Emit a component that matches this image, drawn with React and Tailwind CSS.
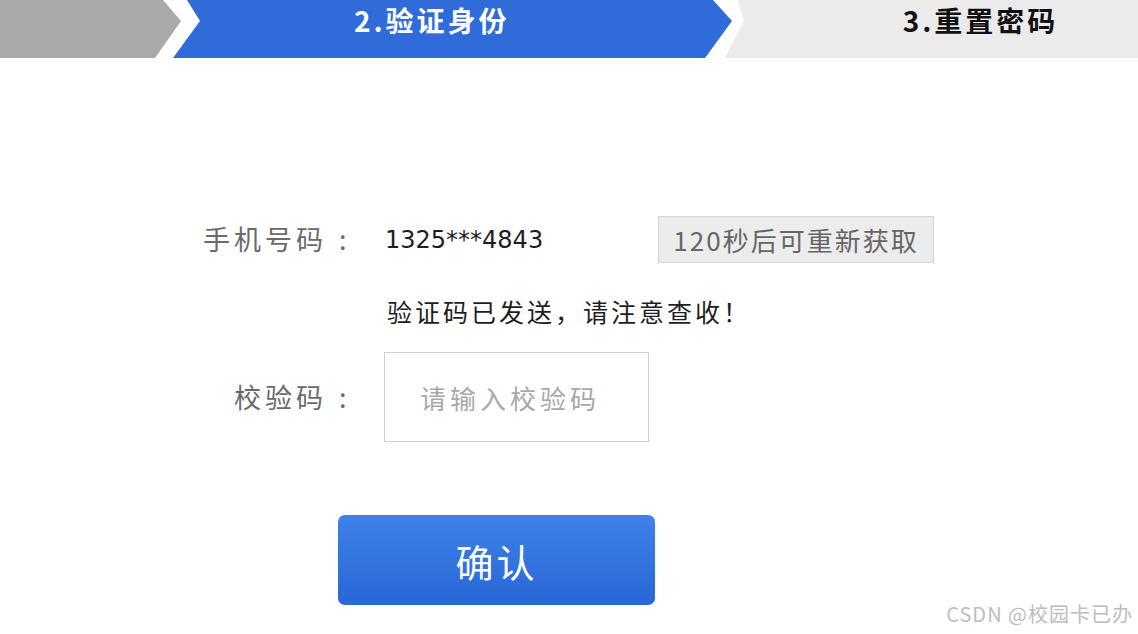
import React from "react";

const cjk = { fontFamily: '"Noto Sans CJK SC", "Noto Sans", sans-serif' };

function Label({ text }) {
  return (
    <div className="flex w-[360px] justify-end text-[27px] text-[#6a6a6a]">
      <span className="tracking-[4px]">{text}</span>
      <span className="inline-block w-[33px] pl-[12px] text-left">:</span>
    </div>
  );
}

export default function App() {
  return (
    <div className="relative w-[1138px] h-[634px] bg-white overflow-hidden font-['Noto_Sans_CJK_SC',sans-serif]">
      {/* Steps bar */}
      <div className="relative h-[58px] w-full">
        <svg className="absolute inset-0" width="1138" height="58" viewBox="0 0 1138 58">
          <polygon points="0,0 163,0 181,21 155,58 0,58" fill="#a9a9a9" />
          <polygon points="187,0 713,0 732,21 705,58 173,58 200,21" fill="#2f6bd9" />
          <polygon points="738,0 1138,0 1138,58 725,58 744,21" fill="#ebebeb" />
        </svg>
        <div className="relative flex h-[40px] items-center">
          <span className="ml-[354px] text-[28px] font-bold tracking-[3px] text-white leading-none">2.验证身份</span>
          <span className="ml-[393px] text-[28px] font-bold tracking-[3px] text-[#111] leading-none">3.重置密码</span>
        </div>
      </div>

      {/* Form */}
      <div className="flex flex-col pt-[158px]">
        <div className="flex h-[47px] items-center">
          <Label text="手机号码" />
          <div className="ml-[25px] w-[273px] font-['DejaVu_Sans',sans-serif] text-[24px] text-[#1e1e1e]">1325***4843</div>
          <div className="flex h-[47px] w-[276px] items-center justify-center border border-[#d6d6d6] bg-[#ececec] text-[26px] tracking-[2px] text-[#666]">
            120秒后可重新获取
          </div>
        </div>

        <div className="mt-[33px] flex h-[30px] items-center">
          <div className="ml-[387px] text-[25px] tracking-[3px] text-[#1e1e1e] leading-none">验证码已发送，请注意查收！</div>
        </div>

        <div className="mt-[26px] flex h-[90px] items-center">
          <Label text="校验码" />
          <div className="ml-[24px] flex h-[90px] w-[265px] items-center border border-[#cfcfcf] bg-white pl-[35px] text-[26px] tracking-[4px] text-[#a8a8a8]">
            请输入校验码
          </div>
        </div>

        <div className="mt-[73px] ml-[338px] flex h-[90px] w-[317px] items-center justify-center rounded-[7px] bg-gradient-to-b from-[#3f82e8] to-[#2767d6] text-[38px] tracking-[3px] text-white">
          确认
        </div>
      </div>

      <div className="absolute right-[5px] bottom-[10px] text-[20px] tracking-[1px] text-[#bdbdbd] leading-none" style={cjk}>
        CSDN @校园卡已办
      </div>
    </div>
  );
}
